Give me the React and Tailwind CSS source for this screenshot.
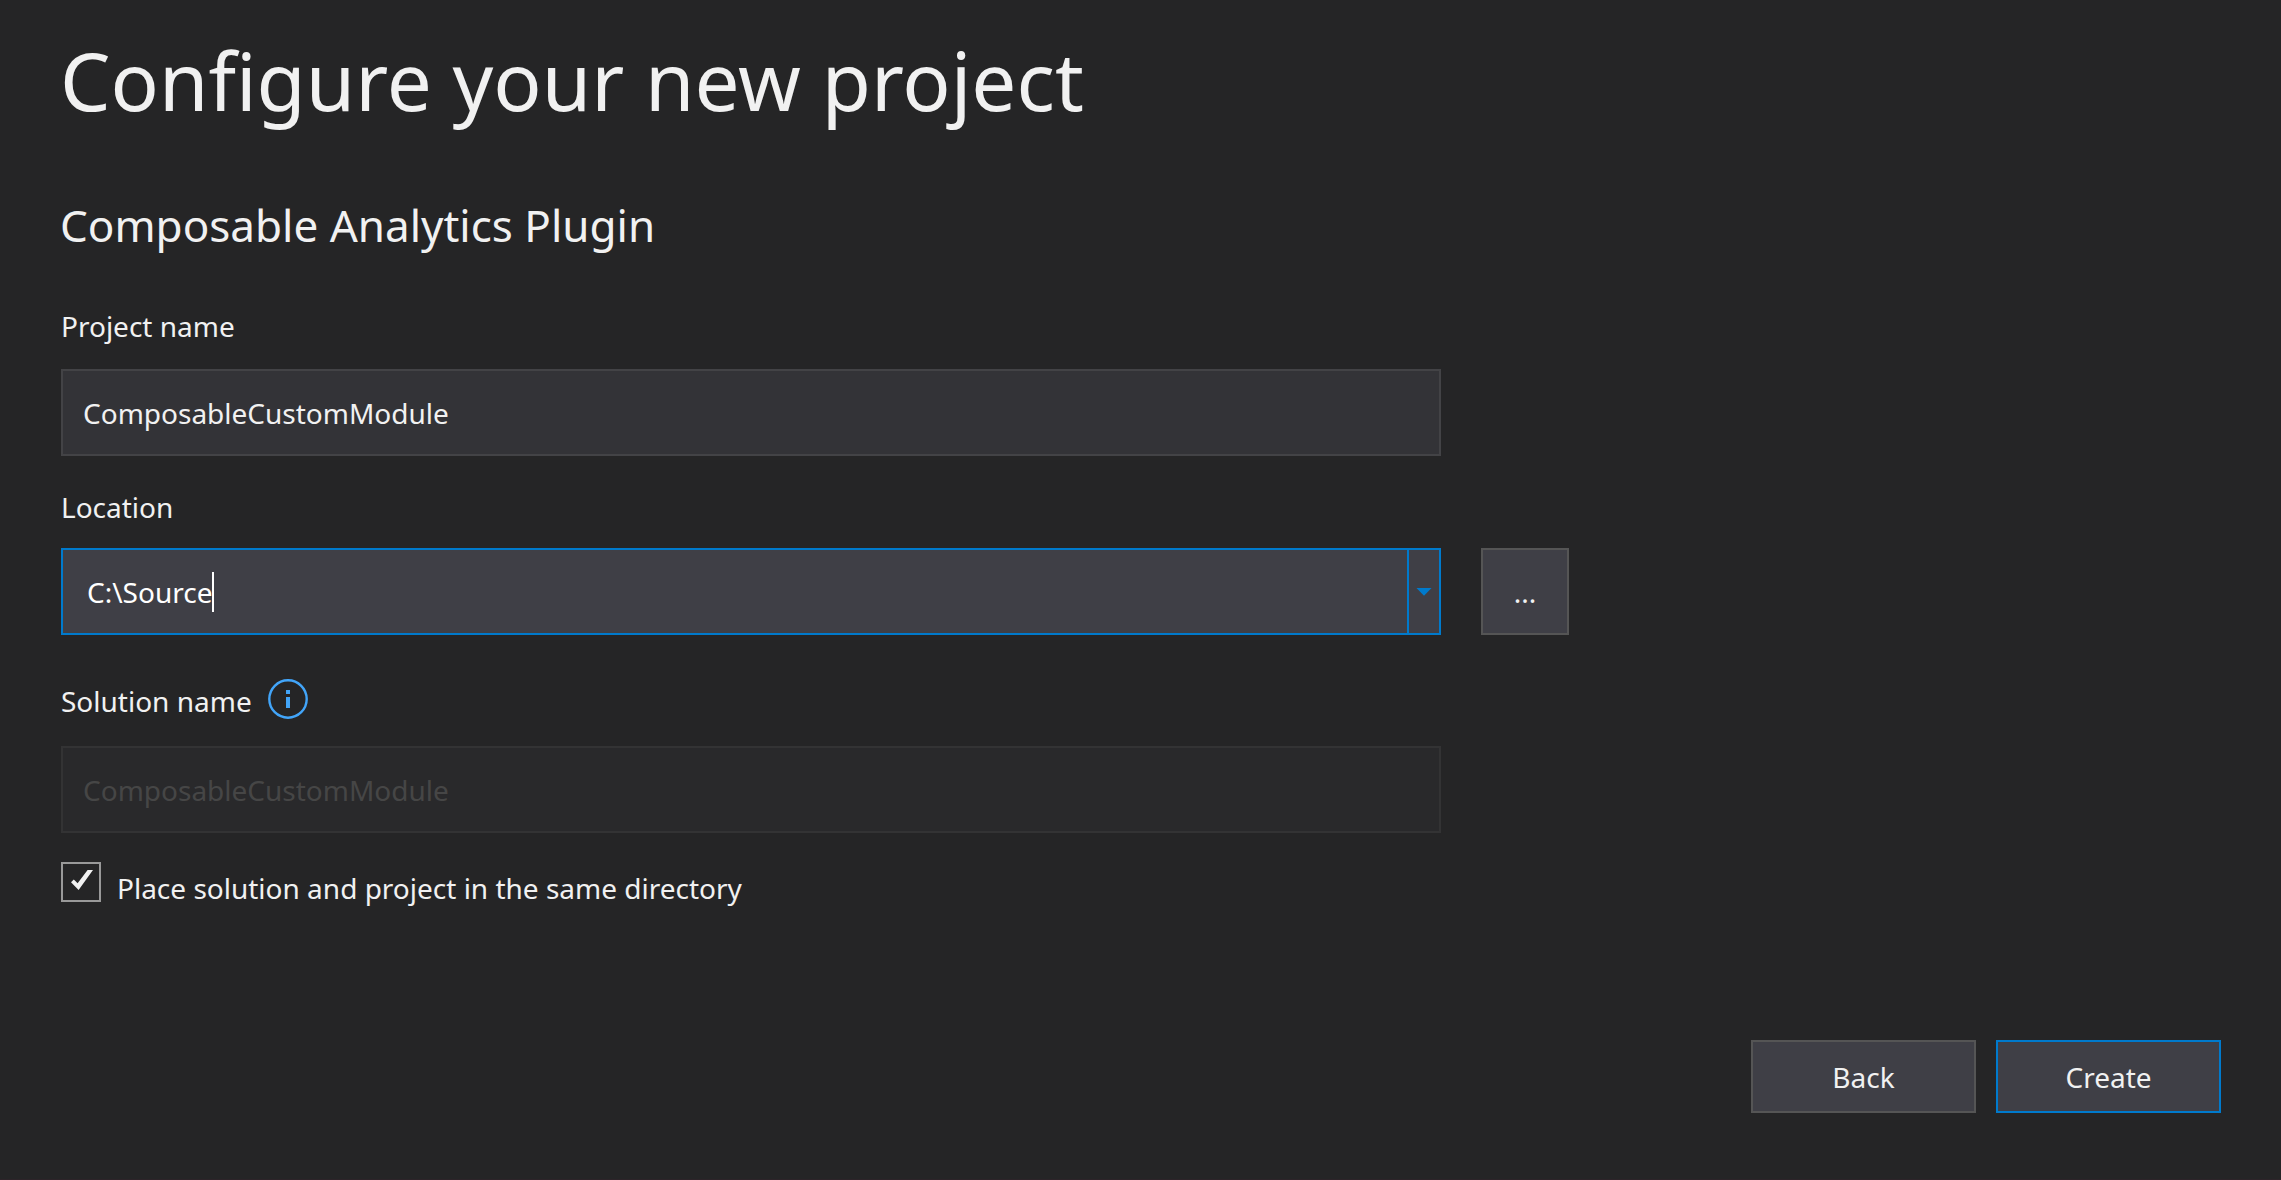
const fieldBase = "h-[87px] w-full border-2 px-5 text-[28px] leading-10 outline-none";
const buttonBase = "border-2 bg-[#3f3f46] text-center text-[28px] leading-10 text-[#f1f1f1]";

function InfoIcon() {
  return (
    <svg viewBox="0 0 40 40" className="size-10 shrink-0" aria-hidden="true">
      <circle cx="20" cy="20" r="18.7" fill="none" stroke="#42a5f9" strokeWidth="2.4" />
      <rect x="18" y="11" width="4" height="4" fill="#42a5f9" />
      <rect x="18" y="18" width="4" height="11" fill="#42a5f9" />
    </svg>
  );
}

export default function App() {
  return (
    <main className="flex min-h-screen flex-col border-b border-[#2d2429] bg-[#252526] px-[60px] pt-8 pb-[66px] font-['Noto_Sans','Open_Sans',sans-serif] text-[28px] leading-10 text-[#f1f1f1]">
      <h1 className="text-[80px] leading-[96px]">Configure your new project</h1>
      <h2 className="mt-[67px] text-[44px] leading-[60px]">Composable Analytics Plugin</h2>

      <form className="mt-[51px] flex grow flex-col pl-px" onSubmit={(e) => e.preventDefault()}>
        <div className="flex max-w-[1380px] flex-col items-start gap-[23px]">
          <label htmlFor="project-name">Project name</label>
          <input
            id="project-name"
            type="text"
            defaultValue="ComposableCustomModule"
            className={`${fieldBase} border-[#434346] bg-[#333337] text-[#f1f1f1]`}
          />
        </div>

        <div className="mt-[31px] flex flex-col items-start gap-[21px]">
          <label htmlFor="location">Location</label>
          <div className="flex w-full gap-10">
            <div className="flex h-[87px] w-full max-w-[1380px] border-2 border-[#007acc] bg-[#3f3f46]">
              <div className="flex grow items-center pl-6">
                <input
                  id="location"
                  type="text"
                  defaultValue="C:\Source"
                  className="[field-sizing:content] bg-transparent text-white outline-none"
                />
                <span className="h-10 w-0.5 bg-white" />
              </div>
              <button
                type="button"
                aria-label="Show recent locations"
                className="flex w-8 shrink-0 items-center justify-center border-l-2 border-[#007acc]"
              >
                <svg viewBox="0 0 16 8" className="h-2 w-4" aria-hidden="true">
                  <path d="M0.5 0H15.5L8 7.7Z" fill="#007acc" />
                </svg>
              </button>
            </div>
            <button type="button" aria-label="Browse" className={`${buttonBase} w-[88px] shrink-0 border-[#555555]`}>
              ...
            </button>
          </div>
        </div>

        <div className="mt-11 flex max-w-[1380px] flex-col gap-[25px]">
          <div className="flex h-[42px] gap-4">
            <label htmlFor="solution-name" className="self-end">
              Solution name
            </label>
            <InfoIcon />
          </div>
          <input
            id="solution-name"
            type="text"
            disabled
            defaultValue="ComposableCustomModule"
            className={`${fieldBase} border-[#333334] bg-[#29292b] text-[#464646]`}
          />
        </div>

        <div className="mt-[29px] flex items-start gap-4">
          <div className="grid size-10 shrink-0">
            <input
              id="same-directory"
              type="checkbox"
              defaultChecked
              className="peer col-start-1 row-start-1 size-10 appearance-none border-2 border-[#999999]"
            />
            <svg
              viewBox="0 0 40 40"
              className="pointer-events-none invisible col-start-1 row-start-1 size-10 peer-checked:visible"
              aria-hidden="true"
            >
              <path d="M10 20.2L12.8 17.4L16.6 21.2L26.6 8H32L17.6 28Z" fill="#f1f1f1" />
            </svg>
          </div>
          <label htmlFor="same-directory" className="mt-1.5">
            Place solution and project in the same directory
          </label>
        </div>

        <div className="mt-auto flex justify-end gap-5">
          <button type="button" className={`${buttonBase} h-[73px] w-[225px] border-[#555555]`}>
            Back
          </button>
          <button type="submit" className={`${buttonBase} h-[73px] w-[225px] border-[#007acc]`}>
            Create
          </button>
        </div>
      </form>
    </main>
  );
}
